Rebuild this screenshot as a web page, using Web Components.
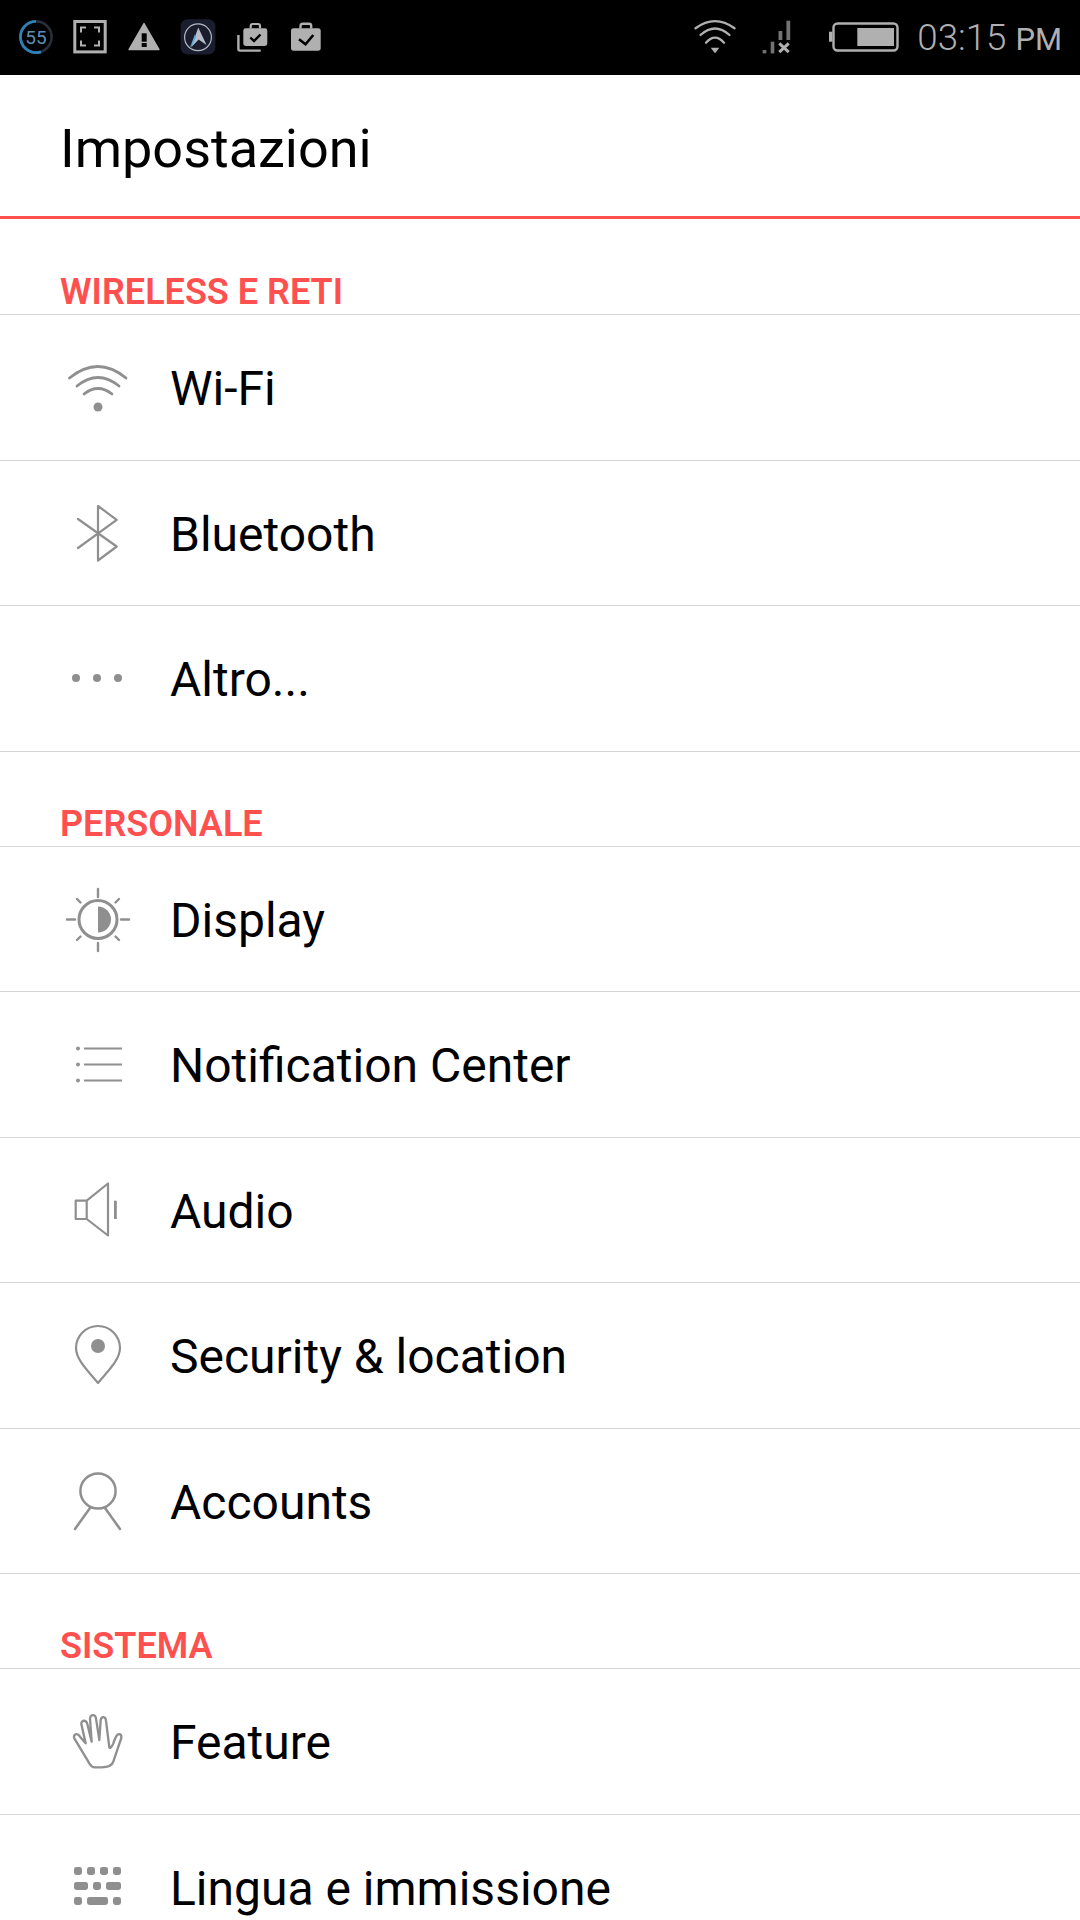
<!DOCTYPE html>
<html lang="it">
<head>
<meta charset="utf-8">
<title>Impostazioni</title>
<style>
  html, body { margin: 0; padding: 0; background: #fff; }
  body { width: 1080px; height: 1920px; overflow: hidden; font-family: Roboto, "Liberation Sans", sans-serif; }
</style>
</head>
<body>
<settings-app>
  <status-bar></status-bar>
  <title-bar>Impostazioni</title-bar>

  <settings-section label="WIRELESS E RETI" head="96">
    <settings-row label="Wi-Fi" icon="wifi"></settings-row>
    <settings-row label="Bluetooth" icon="bluetooth"></settings-row>
    <settings-row label="Altro..." icon="more"></settings-row>
  </settings-section>

  <settings-section label="PERSONALE" head="95">
    <settings-row label="Display" icon="display"></settings-row>
    <settings-row label="Notification Center" icon="list"></settings-row>
    <settings-row label="Audio" icon="audio"></settings-row>
    <settings-row label="Security &amp; location" icon="pin"></settings-row>
    <settings-row label="Accounts" icon="account"></settings-row>
  </settings-section>

  <settings-section label="SISTEMA" head="95">
    <settings-row label="Feature" icon="hand"></settings-row>
    <settings-row label="Lingua e immissione" icon="keyboard"></settings-row>
  </settings-section>
</settings-app>

<script>
// row icons, all drawn on a 80x80 box centred on the row
const ROW_ICONS = {
  wifi: `<g fill="none" stroke="currentColor" stroke-width="2.8" stroke-linecap="round">
      <path d="M11.5 31Q40 8 68 31"/><path d="M19 39Q40 22 61 39"/><path d="M26 47Q40 36 54 47"/></g>
      <circle cx="40" cy="60" r="4.5" fill="currentColor"/>`,
  bluetooth: `<path d="M20 26L58.7 53.5L40 67.5V13L58.7 26.8L20 55" fill="none" stroke="currentColor" stroke-width="2.2" stroke-linecap="round" stroke-linejoin="round"/>`,
  more: `<g fill="currentColor"><circle cx="18" cy="40" r="4"/><circle cx="39" cy="40" r="4"/><circle cx="60" cy="40" r="4"/></g>`,
  display: `<circle cx="40" cy="40.5" r="19" fill="none" stroke="currentColor" stroke-width="3"/>
      <path d="M40 27.5A13 13 0 0 1 40 53.5Z" fill="currentColor"/>
      <path d="M40 10V18M40 64V72M9 40.5H17M63 40.5H71M19 20L22.5 23.5M61 20L57.5 23.5M19 61L22.5 57.5M61 61L57.5 57.5" stroke="currentColor" stroke-width="2.4" stroke-linecap="round" fill="none"/>`,
  list: `<path d="M26 24.5H64M26 40.5H64M26 56.5H64" stroke="currentColor" stroke-width="2.2" fill="none"/>
      <g fill="currentColor"><circle cx="20" cy="24.5" r="1.9"/><circle cx="20" cy="40.5" r="1.9"/><circle cx="20" cy="56.5" r="1.9"/></g>`,
  audio: `<path d="M17.7 30.7H28.7V49H17.7ZM28.7 30.7L50 13.5V65.5L28.7 49" fill="none" stroke="currentColor" stroke-width="2.2" stroke-linejoin="round"/>
      <rect x="56" y="30.7" width="2.8" height="18.3" fill="currentColor"/>`,
  pin: `<path d="M40 68C31 57 18 45 18 33A22 22 0 0 1 62 33C62 45 49 57 40 68Z" fill="none" stroke="currentColor" stroke-width="2.2" stroke-linejoin="round"/>
      <circle cx="40" cy="31" r="7" fill="currentColor"/>`,
  account: `<circle cx="40" cy="30" r="17.6" fill="none" stroke="currentColor" stroke-width="2.5"/>
      <path d="M32 47L17 68M47 47L62 68" stroke="currentColor" stroke-width="2.5" stroke-linecap="round" fill="none"/>`,
  hand: `<g transform="translate(-18 -11) scale(.3333)"><path d="M145 215L103 145C98 134 112 126 120 140L137 160L124 102C123 90 138 88 142 102L155 155L150 85C152 72 166 72 168 85L178 150L182 90C184 78 197 78 198 92L208 172C210 178 216 170 220 160C224 148 228 138 232 135C240 128 248 135 242 150L220 215C215 230 200 232 185 232H165C155 232 150 225 145 215Z" fill="none" stroke="currentColor" stroke-width="7" stroke-linejoin="round"/></g>`,
  keyboard: `<g fill="currentColor">
      <rect x="16" y="20" width="8" height="8" rx="2.4"/><rect x="29" y="20" width="8" height="8" rx="2.4"/><rect x="42" y="20" width="8" height="8" rx="2.4"/><rect x="55" y="20" width="8" height="8" rx="2.4"/>
      <rect x="16" y="35" width="14" height="8" rx="2.4"/><rect x="35" y="35" width="8" height="8" rx="2.4"/><rect x="48" y="35" width="15" height="8" rx="2.4"/>
      <rect x="16" y="50" width="8" height="8" rx="2.4"/><rect x="29" y="50" width="21" height="8" rx="2.4"/><rect x="55" y="50" width="8" height="8" rx="2.4"/></g>`
};

class SettingsApp extends HTMLElement {
  connectedCallback() {
    this.attachShadow({ mode: 'open' });
    this.shadowRoot.innerHTML = `
      <style>
        :host { display: flex; flex-direction: column; width: 1080px; height: 1920px; overflow: hidden; background: #fff; }
      </style>
      <slot></slot>
    `;
  }
}

class StatusBar extends HTMLElement {
  connectedCallback() {
    this.attachShadow({ mode: 'open' });
    this.shadowRoot.innerHTML = `
      <style>
        :host { display: flex; align-items: flex-start; flex: none; box-sizing: border-box; height: 75px; padding: 19px 18px 0 18px; background: #000; color: #b0b0b0; }
        svg { display: block; flex: none; height: 36px; }
        .left { display: flex; gap: 18px; }
        .left svg { width: 36px; }
        .right { display: flex; margin-left: auto; }
        .wifi { width: 42px; }
        .signal { width: 29px; margin-left: 26px; }
        .battery { width: 70px; margin-left: 38px; }
        .clock { margin-left: 18.5px; font: 300 36.7px/38px Roboto, sans-serif; white-space: nowrap; }
        .clock small { font-size: 31px; font-weight: 400; }
        text { font-family: Roboto, sans-serif; }
      </style>
      <div class="left">
        <svg viewBox="0 0 36 36">
          <circle cx="18" cy="18" r="15.6" fill="none" stroke="#2a2e38" stroke-width="2.6"/>
          <path d="M18 2.4A15.6 15.6 0 1 0 23 32.8" fill="none" stroke="#2f80b8" stroke-width="2.8"/>
          <text x="18" y="24.6" font-size="19" text-anchor="middle" fill="#5d8fb5">55</text>
        </svg>
        <svg viewBox="0 0 36 36">
          <rect x="2.8" y="2.5" width="30.4" height="30.4" fill="none" stroke="currentColor" stroke-width="3"/>
          <path d="M9 13.5V8.5H14M22 8.5H27V13.5M27 21.5V26.5H22M14 26.5H9V21.5" fill="none" stroke="currentColor" stroke-width="2"/>
        </svg>
        <svg viewBox="0 0 36 36">
          <path d="M18 4.5L33 30.5H3Z" fill="currentColor" stroke="currentColor" stroke-width="1.4" stroke-linejoin="round"/>
          <rect x="15.7" y="14.3" width="5" height="8.4" fill="#000"/>
          <rect x="15.7" y="24" width="5" height="4" fill="#000"/>
        </svg>
        <svg viewBox="0 0 36 36">
          <rect x=".6" y=".2" width="34.8" height="35.2" rx="7" fill="#1a1d2e"/>
          <circle cx="18" cy="18.3" r="13.4" fill="none" stroke="#b4bac4" stroke-width="1.2"/>
          <path d="M18.3 8.5L26.5 26L18.6 20.5L11 28.5Z" fill="#b8bcc6"/>
          <path d="M14.8 15.5L10 28.5L12.8 25.6L16 18Z" fill="#5aa9dc"/>
        </svg>
        <svg viewBox="0 0 36 36">
          <path d="M16.7 9.5V7Q16.7 5 18.7 5H24Q26 5 26 7V9.5" fill="none" stroke="currentColor" stroke-width="2.2"/>
          <rect x="9.3" y="9.3" width="24" height="17.7" rx="2.4" fill="currentColor"/>
          <path d="M16.3 18.5L20 22L26.5 15.5" fill="none" stroke="#000" stroke-width="2.4"/>
          <path d="M4.4 16V30Q4.4 31.6 6 31.6H26.7" fill="none" stroke="currentColor" stroke-width="2.4"/>
        </svg>
        <svg viewBox="0 0 36 36">
          <path d="M12.5 9.5V7Q12.5 4.8 14.7 4.8H21Q23.2 4.8 23.2 7V9.5" fill="none" stroke="currentColor" stroke-width="2.4"/>
          <rect x="3" y="9.3" width="29.7" height="22.4" rx="2.6" fill="currentColor"/>
          <path d="M11 20.3L17.5 25.3L25.3 16" fill="none" stroke="#000" stroke-width="2.6"/>
        </svg>
      </div>
      <div class="right">
        <svg class="wifi" viewBox="0 0 42 36">
          <g fill="none" stroke="currentColor" stroke-width="2.3" stroke-linecap="round">
            <path d="M1.5 9.3Q21 -5 40.5 9.3"/><path d="M6.5 16Q21 3 35.5 16"/><path d="M12 23.7Q21 13.5 30 23.7"/>
          </g>
          <path d="M16.7 28.7H25.3L21 34.3Z" fill="currentColor"/>
        </svg>
        <svg class="signal" viewBox="0 0 29 36">
          <g fill="#737373">
            <rect x=".7" y="31" width="3.6" height="3.4"/><rect x="8.7" y="22.7" width="3.6" height="11.7"/>
            <rect x="16.5" y="12" width="3.8" height="9"/><rect x="24.4" y="1.7" width="3.8" height="19.3"/>
          </g>
          <path d="M17.3 24.3L26.7 33.2M26.7 24.3L17.3 33.2" stroke="currentColor" stroke-width="3" fill="none"/>
        </svg>
        <svg class="battery" viewBox="0 0 70 36">
          <rect x="4.5" y="4.5" width="64" height="27" rx="4" fill="none" stroke="currentColor" stroke-width="2.4"/>
          <rect x="0" y="12.7" width="3.4" height="10" fill="currentColor"/>
          <rect x="28.3" y="9" width="36.7" height="18" fill="currentColor"/>
        </svg>
        <div class="clock">03:15 <small>PM</small></div>
      </div>
    `;
  }
}

class TitleBar extends HTMLElement {
  connectedCallback() {
    this.attachShadow({ mode: 'open' });
    this.shadowRoot.innerHTML = `
      <style>
        :host { display: flex; align-items: center; flex: none; box-sizing: border-box; height: 144px; padding: 5px 0 0 60px; border-bottom: 3px solid #ff5050; font-size: 54px; color: #000; }
      </style>
      <slot></slot>
    `;
  }
}

class SettingsSection extends HTMLElement {
  connectedCallback() {
    this.attachShadow({ mode: 'open' });
    this.shadowRoot.innerHTML = `
      <style>
        :host { display: block; flex: none; }
        .head { box-sizing: border-box; height: ${this.getAttribute('head')}px; display: flex; align-items: flex-end; padding: 0 0 2px 60px; border-bottom: 1.5px solid #d4d4d4; color: #ff5050; font-size: 36px; font-weight: 600; line-height: 40px; }
      </style>
      <div class="head">${this.getAttribute('label')}</div>
      <slot></slot>
    `;
  }
}

class SettingsRow extends HTMLElement {
  connectedCallback() {
    const icon = ROW_ICONS[this.getAttribute('icon')] || '';
    this.attachShadow({ mode: 'open' });
    this.shadowRoot.innerHTML = `
      <style>
        :host { display: flex; align-items: center; box-sizing: border-box; height: 145.5px; padding-left: 58px; border-bottom: 1.5px solid #d4d4d4; color: #000; }
        svg { display: block; width: 80px; height: 80px; flex: none; color: #8f8f8f; }
        span { margin-left: 32px; font-size: 48px; line-height: 52px; white-space: nowrap; position: relative; top: 2px; }
      </style>
      <svg viewBox="0 0 80 80">${icon}</svg>
      <span>${this.getAttribute('label').replace('&', '&amp;')}</span>
    `;
  }
}

customElements.define('settings-app', SettingsApp);
customElements.define('status-bar', StatusBar);
customElements.define('title-bar', TitleBar);
customElements.define('settings-section', SettingsSection);
customElements.define('settings-row', SettingsRow);
</script>
</body>
</html>
